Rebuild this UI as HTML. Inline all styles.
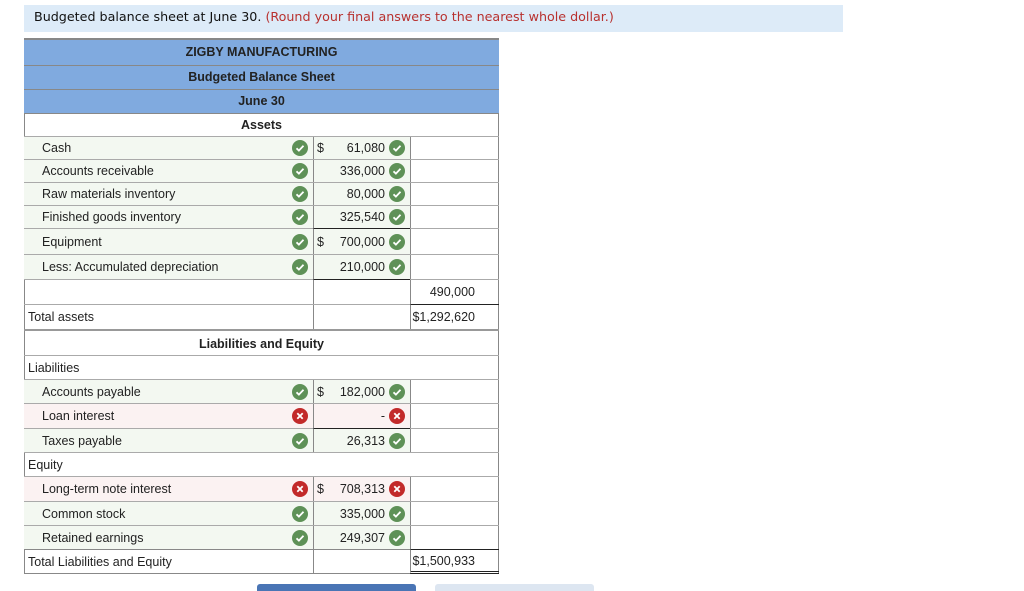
<!DOCTYPE html>
<html><head><meta charset="utf-8"><style>
body{margin:0;background:#fff;width:1024px;height:591px;overflow:hidden;position:relative;font-family:"Liberation Sans",Arial,sans-serif;font-size:12.5px;color:#222}
.title{position:absolute;left:24px;top:5px;width:819px;height:27px;background:#ddebf8;font-family:"DejaVu Sans",sans-serif;font-size:12.7px;line-height:23px;padding-left:10px;box-sizing:border-box;color:#111}
.title span{color:#b8312f}
.tbl{position:absolute;left:24px;top:38px;width:475px;height:536px;border:1px solid #888;box-sizing:border-box}
.row{position:absolute;left:24px;width:475px;border-top:1px solid #aaa;box-sizing:border-box}
.hd{background:#80aadf;text-align:center;font-weight:bold;border-top:1px solid #888}
.c{position:absolute;top:0;bottom:0;box-sizing:border-box}
.l{left:0;width:289px;padding-left:18px;display:flex;align-items:center}
.l.n{padding-left:4px}
.a{left:289px;width:97px;border-left:1px solid #888}
.t{left:386px;width:89px;border-left:1px solid #888;text-align:right;padding-right:24px;display:flex;align-items:center;justify-content:flex-end}
.g .l,.g .a{background:#f3f8f1}
.rd .l,.rd .a{background:#fbf2f2}
.ic{position:absolute;width:16px;height:16px;border-radius:50%;top:50%;margin-top:-8px}
.ok{background:#5e9157}
.no{background:#c22a2a}
.ic svg{position:absolute;left:0;top:0}
.li{left:268px}.ri{left:365px}
.d{position:absolute;left:3px;top:50%;margin-top:-8px;line-height:16px}
.v{position:absolute;right:25px;top:50%;margin-top:-8px;line-height:16px}
</style></head><body>
<div class="title">Budgeted balance sheet at June 30. <span>(Round your final answers to the nearest whole dollar.)</span></div>
<div class="tbl"></div>
<div class="row hd" style="top:39px;height:26px;line-height:25px">ZIGBY MANUFACTURING</div>
<div class="row hd" style="top:65px;height:24px;line-height:23px">Budgeted Balance Sheet</div>
<div class="row hd" style="top:89px;height:24px;line-height:23px">June 30</div>
<div class="row" style="top:113px;height:23px;line-height:22px;text-align:center;font-weight:bold;border-top-color:#888">Assets</div>

<div class="row g" style="top:136px;height:23px"><div class="c l">Cash</div><div class="c a"><div class="d">$</div><div class="v">61,080</div></div><div class="c t"></div><div class="ic ok li"><svg width="16" height="16"><path d="M4.5 8.3l2.4 2.3 4.6-4.8" stroke="#fff" stroke-width="1.8" fill="none"/></svg></div><div class="ic ok ri"><svg width="16" height="16"><path d="M4.5 8.3l2.4 2.3 4.6-4.8" stroke="#fff" stroke-width="1.8" fill="none"/></svg></div></div>
<div class="row g" style="top:159px;height:23px"><div class="c l">Accounts receivable</div><div class="c a"><div class="v">336,000</div></div><div class="c t"></div><div class="ic ok li"><svg width="16" height="16"><path d="M4.5 8.3l2.4 2.3 4.6-4.8" stroke="#fff" stroke-width="1.8" fill="none"/></svg></div><div class="ic ok ri"><svg width="16" height="16"><path d="M4.5 8.3l2.4 2.3 4.6-4.8" stroke="#fff" stroke-width="1.8" fill="none"/></svg></div></div>
<div class="row g" style="top:182px;height:23px"><div class="c l">Raw materials inventory</div><div class="c a"><div class="v">80,000</div></div><div class="c t"></div><div class="ic ok li"><svg width="16" height="16"><path d="M4.5 8.3l2.4 2.3 4.6-4.8" stroke="#fff" stroke-width="1.8" fill="none"/></svg></div><div class="ic ok ri"><svg width="16" height="16"><path d="M4.5 8.3l2.4 2.3 4.6-4.8" stroke="#fff" stroke-width="1.8" fill="none"/></svg></div></div>
<div class="row g" style="top:205px;height:23px"><div class="c l">Finished goods inventory</div><div class="c a"><div class="v">325,540</div></div><div class="c t"></div><div class="ic ok li"><svg width="16" height="16"><path d="M4.5 8.3l2.4 2.3 4.6-4.8" stroke="#fff" stroke-width="1.8" fill="none"/></svg></div><div class="ic ok ri"><svg width="16" height="16"><path d="M4.5 8.3l2.4 2.3 4.6-4.8" stroke="#fff" stroke-width="1.8" fill="none"/></svg></div></div>
<div class="row g" style="top:228px;height:26px"><div class="c l">Equipment</div><div class="c a" style="border-top:1px solid #222;top:-1px"><div class="d">$</div><div class="v">700,000</div></div><div class="c t"></div><div class="ic ok li"><svg width="16" height="16"><path d="M4.5 8.3l2.4 2.3 4.6-4.8" stroke="#fff" stroke-width="1.8" fill="none"/></svg></div><div class="ic ok ri"><svg width="16" height="16"><path d="M4.5 8.3l2.4 2.3 4.6-4.8" stroke="#fff" stroke-width="1.8" fill="none"/></svg></div></div>
<div class="row g" style="top:254px;height:25px"><div class="c l">Less: Accumulated depreciation</div><div class="c a"><div class="v">210,000</div></div><div class="c t"></div><div class="ic ok li"><svg width="16" height="16"><path d="M4.5 8.3l2.4 2.3 4.6-4.8" stroke="#fff" stroke-width="1.8" fill="none"/></svg></div><div class="ic ok ri"><svg width="16" height="16"><path d="M4.5 8.3l2.4 2.3 4.6-4.8" stroke="#fff" stroke-width="1.8" fill="none"/></svg></div></div>
<div class="row" style="top:279px;height:25px"><div class="c l"></div><div class="c a" style="border-top:1px solid #222;top:-1px"></div><div class="c t">490,000</div></div>
<div class="row" style="top:304px;height:25px"><div class="c l n">Total assets</div><div class="c a"></div><div class="c t" style="border-top:1px solid #222;top:-1px">$1,292,620</div></div>
<div class="row" style="top:329px;height:26px;line-height:27px;text-align:center;font-weight:bold;border-top:2px solid #999">Liabilities and Equity</div>
<div class="row" style="top:355px;height:24px"><div class="c l n">Liabilities</div></div>
<div class="row g" style="top:379px;height:24px"><div class="c l">Accounts payable</div><div class="c a"><div class="d">$</div><div class="v">182,000</div></div><div class="c t"></div><div class="ic ok li"><svg width="16" height="16"><path d="M4.5 8.3l2.4 2.3 4.6-4.8" stroke="#fff" stroke-width="1.8" fill="none"/></svg></div><div class="ic ok ri"><svg width="16" height="16"><path d="M4.5 8.3l2.4 2.3 4.6-4.8" stroke="#fff" stroke-width="1.8" fill="none"/></svg></div></div>
<div class="row rd" style="top:403px;height:25px"><div class="c l">Loan interest</div><div class="c a"><div class="v">-</div></div><div class="c t"></div><div class="ic no li"><svg width="16" height="16"><path d="M5.3 5.3l5.4 5.4M10.7 5.3l-5.4 5.4" stroke="#fff" stroke-width="1.8"/></svg></div><div class="ic no ri"><svg width="16" height="16"><path d="M5.3 5.3l5.4 5.4M10.7 5.3l-5.4 5.4" stroke="#fff" stroke-width="1.8"/></svg></div></div>
<div class="row g" style="top:428px;height:24px"><div class="c l">Taxes payable</div><div class="c a" style="border-top:1px solid #222;top:-1px"><div class="v">26,313</div></div><div class="c t"></div><div class="ic ok li"><svg width="16" height="16"><path d="M4.5 8.3l2.4 2.3 4.6-4.8" stroke="#fff" stroke-width="1.8" fill="none"/></svg></div><div class="ic ok ri"><svg width="16" height="16"><path d="M4.5 8.3l2.4 2.3 4.6-4.8" stroke="#fff" stroke-width="1.8" fill="none"/></svg></div></div>
<div class="row" style="top:452px;height:24px"><div class="c l n">Equity</div></div>
<div class="row rd" style="top:476px;height:25px"><div class="c l">Long-term note interest</div><div class="c a"><div class="d">$</div><div class="v">708,313</div></div><div class="c t"></div><div class="ic no li"><svg width="16" height="16"><path d="M5.3 5.3l5.4 5.4M10.7 5.3l-5.4 5.4" stroke="#fff" stroke-width="1.8"/></svg></div><div class="ic no ri"><svg width="16" height="16"><path d="M5.3 5.3l5.4 5.4M10.7 5.3l-5.4 5.4" stroke="#fff" stroke-width="1.8"/></svg></div></div>
<div class="row g" style="top:501px;height:24px"><div class="c l">Common stock</div><div class="c a"><div class="v">335,000</div></div><div class="c t"></div><div class="ic ok li"><svg width="16" height="16"><path d="M4.5 8.3l2.4 2.3 4.6-4.8" stroke="#fff" stroke-width="1.8" fill="none"/></svg></div><div class="ic ok ri"><svg width="16" height="16"><path d="M4.5 8.3l2.4 2.3 4.6-4.8" stroke="#fff" stroke-width="1.8" fill="none"/></svg></div></div>
<div class="row g" style="top:525px;height:24px"><div class="c l">Retained earnings</div><div class="c a"><div class="v">249,307</div></div><div class="c t"></div><div class="ic ok li"><svg width="16" height="16"><path d="M4.5 8.3l2.4 2.3 4.6-4.8" stroke="#fff" stroke-width="1.8" fill="none"/></svg></div><div class="ic ok ri"><svg width="16" height="16"><path d="M4.5 8.3l2.4 2.3 4.6-4.8" stroke="#fff" stroke-width="1.8" fill="none"/></svg></div></div>
<div class="row" style="top:549px;height:25px;border-top-color:#888"><div class="c l n">Total Liabilities and Equity</div><div class="c a"></div><div class="c t" style="border-top:1px solid #222;top:-1px;border-bottom:3px double #222">$1,500,933</div></div>
<div style="position:absolute;left:257px;top:584px;width:159px;height:7px;background:#4a75b5;border-radius:3px 3px 0 0"></div>
<div style="position:absolute;left:435px;top:584px;width:159px;height:7px;background:#dde6f1;border-radius:3px 3px 0 0"></div>
</body></html>
